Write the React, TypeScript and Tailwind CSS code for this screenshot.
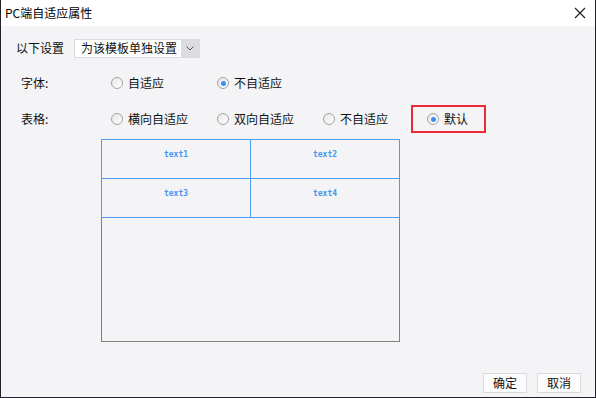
import React from "react";

function Radio({ checked }: { checked?: boolean }) {
  return (
    <span className="flex h-[12px] w-[12px] shrink-0 items-center justify-center rounded-full border border-[#a3a3a3] bg-gradient-to-br from-[#e6e6e6] to-[#ffffff]">
      {checked && <span className="h-[5px] w-[5px] rounded-full bg-[#3d8ef2]"></span>}
    </span>
  );
}

function Option({ label, checked }: { label: string; checked?: boolean }) {
  return (
    <div className="flex w-[106px] items-center gap-[5px]">
      <Radio checked={checked} />
      <span>{label}</span>
    </div>
  );
}

export default function App() {
  return (
    <div className="flex h-[398px] w-[596px] flex-col border-x border-b border-[#22222c] bg-[#f4f4f7] font-['Noto_Sans_CJK_SC','Noto_Sans',sans-serif] text-[12px] leading-none text-[#111]">
      {/* title bar */}
      <div className="flex h-[26px] shrink-0 items-center justify-between bg-white pl-[4px] pr-[9px]">
        <span className="text-[12px] text-[#000]">PC端自适应属性</span>
        <svg width="12" height="12" viewBox="0 0 12 12" className="text-[#222]">
          <path d="M1 1 L11 11 M11 1 L1 11" stroke="currentColor" strokeWidth="1.2" fill="none" />
        </svg>
      </div>

      {/* settings for */}
      <div className="mt-[12px] flex h-[20px] items-center pl-[15px]">
        <span className="w-[58px]">以下设置</span>
        <div className="flex h-[19px] border border-[#dcdce0]">
          <div className="flex w-[106px] items-center bg-white pl-[6px]">为该模板单独设置</div>
          <div className="flex w-[18px] items-center justify-center bg-[#dcdce0]">
            <svg width="8" height="5" viewBox="0 0 8 5">
              <path d="M0.5 0.5 L4 4 L7.5 0.5" stroke="#555" strokeWidth="1" fill="none" />
            </svg>
          </div>
        </div>
      </div>

      {/* font */}
      <div className="mt-[11px] flex h-[28px] items-center pl-[20px]">
        <span className="w-[90px]">字体:</span>
        <Option label="自适应" />
        <Option label="不自适应" checked />
      </div>

      {/* table */}
      <div className="mt-[8px] flex h-[28px] items-center pl-[20px]">
        <span className="w-[90px]">表格:</span>
        <Option label="横向自适应" />
        <Option label="双向自适应" />
        <Option label="不自适应" />
        <div className="-ml-[18px] flex h-[28px] w-[75px] items-center gap-[5px] border-2 border-[#ec2a35] pl-[14px]">
          <Radio checked />
          <span>默认</span>
        </div>
      </div>

      {/* preview */}
      <div className="ml-[100px] mt-[6px] w-[299px]">
        <div className="grid grid-cols-[149px_148px] border border-[#4b9bf0] font-['DejaVu_Sans_Mono',monospace] text-[8px] font-bold text-[#4596ee]">
          <div className="flex h-[39px] justify-center border-b border-r border-[#4b9bf0] pt-[11px]">text1</div>
          <div className="flex h-[39px] justify-center border-b border-[#4b9bf0] pt-[11px]">text2</div>
          <div className="flex h-[38px] justify-center border-r border-[#4b9bf0] pt-[11px]">text3</div>
          <div className="flex h-[38px] justify-center pt-[11px]">text4</div>
        </div>
        <div className="h-[124px] border-x border-b border-[#808080]"></div>
      </div>

      {/* buttons */}
      <div className="mt-[31px] flex justify-end gap-[10px] pr-[14px]">
        <button className="h-[20px] w-[44px] border border-[#dadade] bg-[#fcfcfc] text-[12px]">确定</button>
        <button className="h-[20px] w-[44px] border border-[#dadade] bg-[#fcfcfc] text-[12px]">取消</button>
      </div>
    </div>
  );
}
